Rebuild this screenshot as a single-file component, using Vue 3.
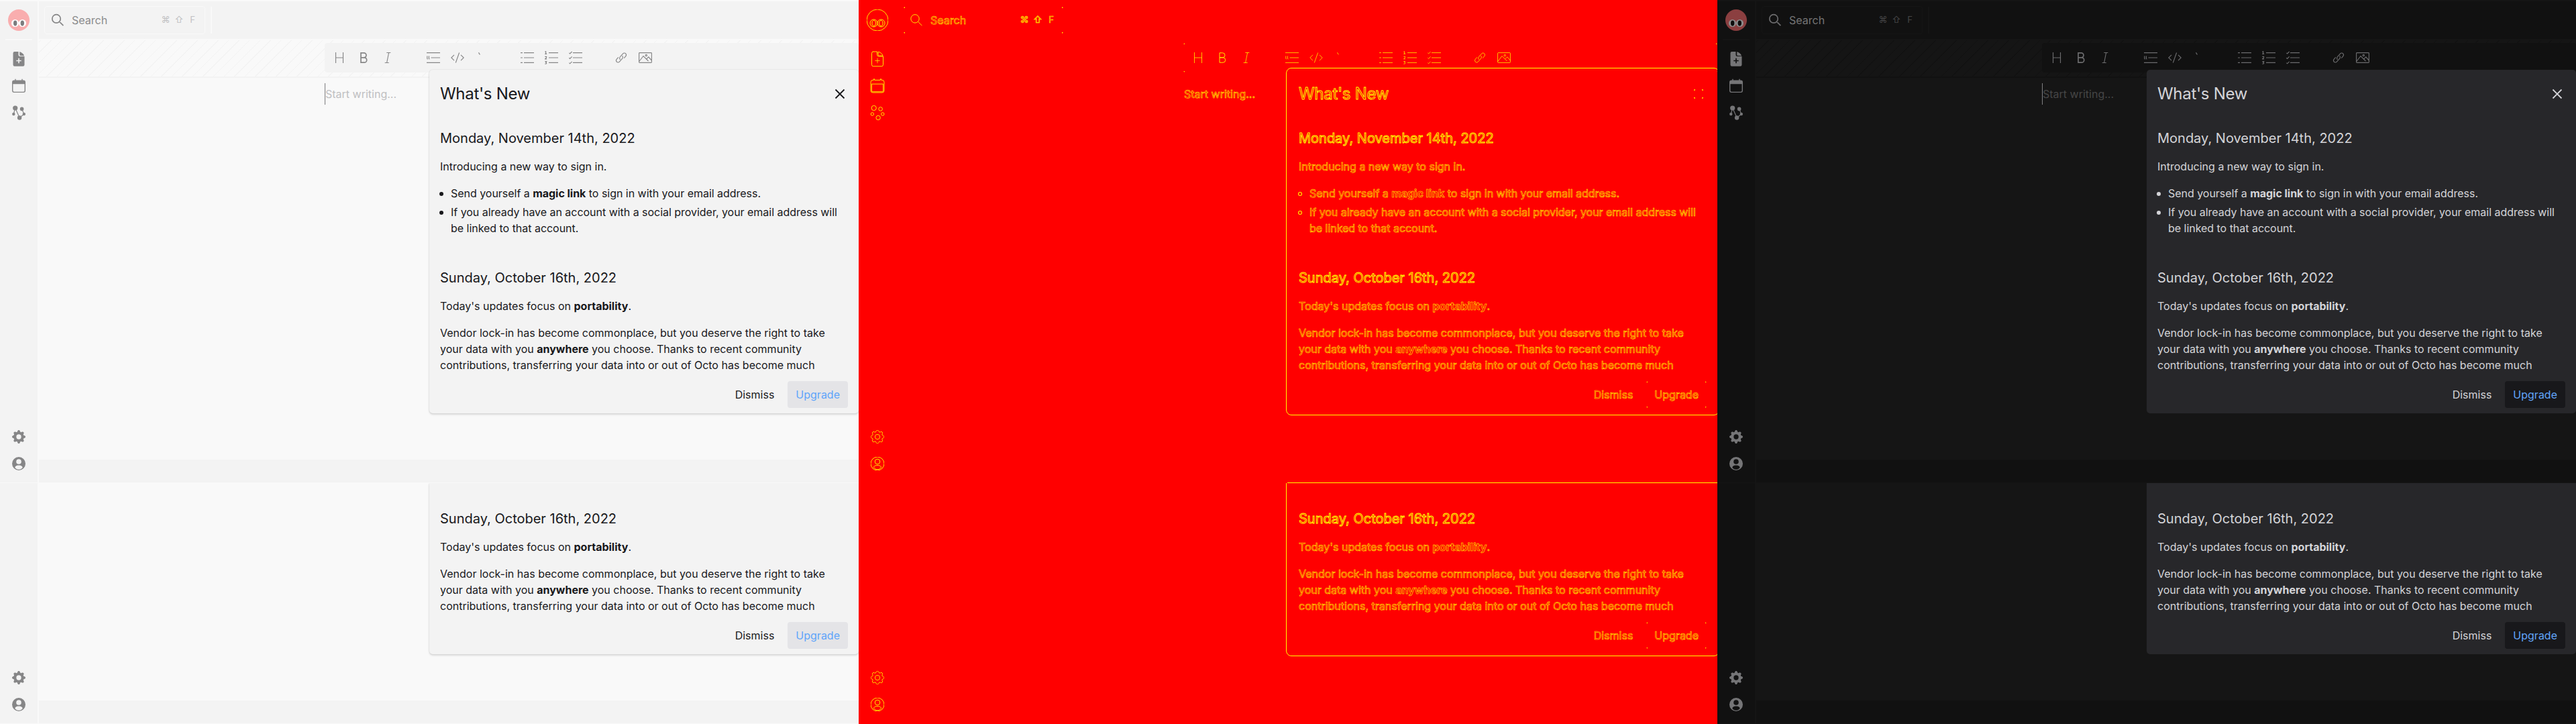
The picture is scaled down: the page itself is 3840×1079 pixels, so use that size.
<script setup>
const themes = ['light', 'diff', 'dark']
const slices = ['full', 'tail']
const tools = [
  ['heading', 'bold', 'italic'],
  ['quote', 'code', 'tick'],
  ['bullets', 'numbers', 'tasks'],
  ['link', 'image'],
]
</script>

<template>
  <svg class="defs" width="0" height="0">
    <symbol id="logo" viewBox="0 0 32 32">
      <circle class="skin" cx="16" cy="16" r="16" />
      <ellipse class="eye" cx="10.500" cy="20.500" rx="5.500" ry="5.500" />
      <ellipse class="eye" cx="21.500" cy="20.500" rx="5.500" ry="5.500" />
      <ellipse class="pupil" cx="10.700" cy="20.600" rx="2.700" ry="4.100" />
      <ellipse class="pupil" cx="21.300" cy="20.600" rx="2.700" ry="4.100" />
    </symbol>
    <symbol id="newfile" viewBox="0 0 24 24">
      <path class="solid" d="M5.500 1h6v4.500a2.500 2.500 0 0 0 2.500 2.500h6.500v12.500a2.300 2.300 0 0 1-2.300 2.300H5.800a2.300 2.300 0 0 1-2.300-2.300V3.300A2.300 2.300 0 0 1 5.800 1zM13.200 1.200c3 .5 6.300 3.200 6.900 6l-5.500-.1a1.400 1.400 0 0 1-1.400-1.400z" />
      <path class="hole" d="M12 10.800v7.400M8.300 14.500h7.400" />
    </symbol>
    <symbol id="calendar" viewBox="0 0 24 24">
      <path class="solid" fill-rule="evenodd" d="M6.300 1.800h1.400v1.600h8.600V1.800h1.400v1.600h1.300a3 3 0 0 1 3 3v12.600a3 3 0 0 1-3 3H5a3 3 0 0 1-3-3V6.400a3 3 0 0 1 3-3h1.300zM3.400 9.200v9.800A1.700 1.700 0 0 0 5.100 20.700h13.800a1.700 1.700 0 0 0 1.700-1.700V9.200z" />
    </symbol>
    <symbol id="graph" viewBox="0 0 24 24">
      <path class="wire" d="M6.500 5.200 4.400 14M6.800 5.200 13.200 19.500M16.600 6.300 19.800 14 13.200 19.500" />
      <circle class="solid" cx="6.700" cy="5" r="3.600" />
      <circle class="solid" cx="16.600" cy="6.400" r="2.800" />
      <circle class="solid" cx="4.300" cy="14" r="2.200" />
      <circle class="solid" cx="19.800" cy="14" r="2.200" />
      <circle class="solid" cx="13.100" cy="19.500" r="3.200" />
    </symbol>
    <symbol id="gear" viewBox="0 0 16 16">
      <path class="solid fine" fill-rule="evenodd" d="M9.405 1.050c-.413-1.400-2.397-1.400-2.810 0l-.1.340a1.464 1.464 0 0 1-2.105.872l-.310-.170c-1.283-.698-2.686.705-1.987 1.987l.169.311c.446.820.023 1.841-.872 2.105l-.340.100c-1.400.413-1.400 2.397 0 2.810l.340.100a1.464 1.464 0 0 1 .872 2.105l-.170.310c-.698 1.283.705 2.686 1.987 1.987l.311-.169a1.464 1.464 0 0 1 2.105.872l.100.340c.413 1.400 2.397 1.400 2.810 0l.100-.340a1.464 1.464 0 0 1 2.105-.872l.310.170c1.283.698 2.686-.705 1.987-1.987l-.169-.311a1.464 1.464 0 0 1 .872-2.105l.340-.100c1.400-.413 1.400-2.397 0-2.810l-.340-.100a1.464 1.464 0 0 1-.872-2.105l.170-.310c.698-1.283-.705-2.686-1.987-1.987l-.311.169a1.464 1.464 0 0 1-2.105-.872zM8 10.930a2.930 2.930 0 1 1 0-5.860 2.930 2.930 0 0 1 0 5.860z" />
    </symbol>
    <symbol id="person" viewBox="0 0 20 20">
      <path class="solid" fill-rule="evenodd" d="M10 0a10 10 0 1 0 0 20 10 10 0 0 0 0-20zM10 3.200a3.800 3.800 0 1 1 0 7.600 3.800 3.800 0 0 1 0-7.600zM4.200 15.400c1.400-2.600 3.400-2.800 5.800-2.800s4.400.2 5.800 2.800c-1.500 2.300-3.500 3.300-5.800 3.300s-4.300-1-5.800-3.300z" />
    </symbol>
    <symbol id="search" viewBox="0 0 20 20">
      <path class="line thick" d="M8 1.700a6.200 6.200 0 1 0 0 12.400 6.200 6.200 0 0 0 0-12.400zM12.600 12.400l5.800 5.800" />
    </symbol>
    <symbol id="close" viewBox="0 0 20 20"><path class="line cross" d="M3.500 3.500l13 13M16.500 3.500l-13 13" /></symbol>
    <symbol id="heading" viewBox="0 0 20 20"><path class="line" d="M4.500 2v16M15.500 2v16M4.500 10h11" /></symbol>
    <symbol id="bold" viewBox="0 0 20 20"><path class="line thick" d="M6 2.800h4.500a3.500 3.500 0 0 1 0 7H6zM6 9.800h5a3.700 3.700 0 0 1 0 7.400H6z" /></symbol>
    <symbol id="italic" viewBox="0 0 20 20"><path class="line" d="M8.300 2.500h6M5.700 17.500h6M11.600 2.500 8.600 17.500" /></symbol>
    <symbol id="quote" viewBox="0 0 20 20"><path class="line" d="M0 2.600h20M6.500 10h13.500M0 17.400h20" /><path class="line" d="M.8 7.500v3.500q0 1 1 1M3.400 7.500v3.500q0 1 1 1" /></symbol>
    <symbol id="code" viewBox="0 0 20 20"><path class="line" d="M5 5.800.8 10 5 14.200M15 5.800l4.200 4.200-4.200 4.200M12.600 2.500 7.300 17.500" /></symbol>
    <symbol id="tick" viewBox="0 0 20 20"><path class="line" d="M5.500 2.200q1 2.300 2 3.200" /></symbol>
    <symbol id="bullets" viewBox="0 0 20 20"><path class="line" d="M0 2.600h3M0 10h3M0 17.400h3M5 2.600h15M5 10h15M5 17.400h15" /></symbol>
    <symbol id="numbers" viewBox="0 0 20 20"><path class="line" d="M6 2.600h14M6 10h14M6 17.400h14M.3 1.300 1.700.7V4.300M.2 4.300h3M.3 8.300h2.300v1.500L.5 11.800h2.600M.3 15.500h2.400l-1.200 1.600q1.500.2 1.200 1.300T.3 19.200" /></symbol>
    <symbol id="tasks" viewBox="0 0 20 20"><path class="line" d="M6 2.600h14M6 10h14M6 17.400h14M.3 2.800l1.300 1.200 3-3M.3 10.200l1.300 1.200 3-3M.3 17.600l1.300 1.200 3-3" /></symbol>
    <symbol id="link" viewBox="0 0 20 20"><path class="line" d="M8.500 12.800a3 3 0 0 1 .2-4.400l4-4.500a2.700 2.700 0 0 1 4 0 2.900 2.900 0 0 1 0 3.900l-2.500 2.900M11.500 7.200a3 3 0 0 1-.2 4.400l-4 4.500a2.700 2.700 0 0 1-4 0 2.900 2.900 0 0 1 0-3.900l2.500-2.900" /></symbol>
    <symbol id="image" viewBox="0 0 20 20"><path class="line" d="M1.500 2.600h17q.9 0 .9.900v13q0 .9-.9.900h-17q-.9 0-.9-.9v-13q0-.9.900-.9zM.8 15.500 7 7.500l7.500 7.500M11.800 11.800l3-3 4.500 5.200" /><circle class="line" cx="11.300" cy="6.500" r="1.200" /></symbol>
  </svg>

  <div class="board">
    <div v-for="theme in themes" :key="theme" class="column" :class="theme">
      <div v-for="slice in slices" :key="slice" class="app" :class="slice">
        <nav class="sidebar">
          <template v-if="slice === 'full'">
            <svg class="logo"><use href="#logo" /></svg>
            <i class="rule" />
            <svg class="nav"><use href="#newfile" /></svg>
            <svg class="nav"><use href="#calendar" /></svg>
            <svg class="nav"><use href="#graph" /></svg>
          </template>
          <span class="grow" />
          <svg class="nav small"><use href="#gear" /></svg>
          <svg class="nav small"><use href="#person" /></svg>
        </nav>
        <main class="main">
          <template v-if="slice === 'full'">
            <header class="topbar">
              <div class="search marks">
                <svg class="glass"><use href="#search" /></svg>
                <span class="label">Search</span>
                <kbd>⌘</kbd><kbd>⇧</kbd><kbd>F</kbd>
              </div>
              <i class="split" />
            </header>
            <div class="toolrow">
              <div class="tools marks">
                <div v-for="(group, g) in tools" :key="g" class="group">
                  <svg v-for="t in group" :key="t" class="tool"><use :href="'#' + t" /></svg>
                </div>
              </div>
            </div>
          </template>
          <div class="editor"><span v-if="slice === 'full'" class="placeholder">Start writing...</span></div>
          <footer class="status" />
        </main>
        <section class="modal">
          <div v-if="slice === 'full'" class="title"><h1>What's New</h1><svg class="close"><use href="#close" /></svg></div>
          <div class="body">
            <article v-if="slice === 'full'">
              <h2>Monday, November 14th, 2022</h2>
              <p>Introducing a new way to sign in.</p>
              <ul>
                <li>Send yourself a <b>magic link</b> to sign in with your email address.</li>
                <li>If you already have an account with a social provider, your email address will be linked to that account.</li>
              </ul>
            </article>
            <article>
              <h2>Sunday, October 16th, 2022</h2>
              <p>Today's updates focus on <b>portability</b>.</p>
              <p>Vendor lock-in has become commonplace, but you deserve the right to take your data with you <b>anywhere</b> you choose. Thanks to recent community contributions, transferring your data into or out of Octo has become much</p>
            </article>
          </div>
          <div class="actions"><button>Dismiss</button><button class="primary marks">Upgrade</button></div>
        </section>
      </div>
    </div>
  </div>
</template>

<style>
body { margin: 0; overflow: hidden; }
</style>

<style scoped>
.defs { position: absolute; }
.solid { fill: var(--icon); stroke: var(--edge); stroke-width: .9; }
.fine { stroke-width: .65; }
.wire { fill: none; stroke: var(--icon); stroke-width: 1.2; }
.hole { fill: none; stroke: var(--hole); stroke-width: var(--hole-width, 1.6); }
.line { fill: none; stroke: var(--icon-line); stroke-width: var(--thin, 1.15); }
.thick { stroke-width: var(--bold, 1.7); }
.cross { stroke-width: 1.8; stroke-dasharray: var(--dash, none); }
.skin { fill: var(--skin); stroke: var(--edge); stroke-width: .9; }
.eye { fill: var(--eye); stroke: var(--edge); }
.pupil { fill: var(--pupil); stroke: var(--edge); }

.board { display: flex; width: 3840px; height: 1079px; font-family: Inter, "Noto Sans", sans-serif; font-size: 16px; line-height: 24px; }
.column { width: 1280px; overflow: hidden; }
.light {
  --bar: #f3f3f3; --page: #f9f9f9; --icon: #868687; --icon-line: #868687; --edge: none; --hole: #f3f3f3;
  --skin: #f9adae; --eye: #fff; --pupil: #7c7c7e; --muted: #8b8b8c; --faint: #c0c0c2; --caret: #7c7c7e;
  --modal: #f3f3f3; --text: #18181b; --button: #e4e4e7; --accent: #60a5fa;
}
.dark {
  --bar: #111; --page: #151515; --icon: #757577; --icon-line: #6c6c6e; --edge: none; --hole: #111;
  --skin: #8b3f40; --eye: #8c8c8c; --pupil: #0c0c0c; --muted: #757576; --faint: #454546; --caret: #808082;
  --modal: #27272a; --text: #d4d4d8; --button: #18181b; --accent: #60a5fa;
}
.diff {
  --bar: #f00; --page: #f00; --icon: #f00; --icon-line: #ff0; --edge: #ff0; --hole: #ff0; --hole-width: .7;
  --skin: #f00; --eye: #f00; --pupil: #f00; --muted: #f00; --faint: #f00; --caret: #f00;
  --modal: #f00; --text: #f00; --button: #f00; --accent: #f00;
  --thin: .75; --bold: .9; --dash: 1.5 15.4;
  -webkit-text-stroke: .55px #ff0;
}
.app { position: relative; display: flex; box-sizing: border-box; width: 1280px; padding-bottom: 1px; overflow: hidden; background: var(--page); }
.full { height: 720px; padding-top: 2px; }
.tail { height: 359px; }
.sidebar { display: flex; flex-direction: column; align-items: center; box-sizing: border-box; width: 56px; margin-right: 2px; padding: 12px 0 18px; background: var(--bar); }
.logo { width: 32px; height: 32px; }
.rule { width: 40px; height: 2px; margin: 12px 0 16px; background: var(--page); }
.nav { width: 24px; height: 24px; margin-bottom: 16px; overflow: visible; }
.small { width: 20px; height: 20px; margin: 0 0 20px; }
.small:last-child { margin-bottom: 0; }
.grow { flex: 1; }
.main { display: flex; flex: 1; flex-direction: column; min-width: 0; }
.topbar { display: flex; align-items: center; height: 56px; padding-left: 8px; background: var(--bar); }
.search { display: flex; align-items: center; box-sizing: border-box; width: 240px; height: 42px; padding: 0 8px 0 9px; border: 1px solid var(--page); border-radius: 4px; }
.glass { width: 20px; height: 20px; }
.label { flex: 1; margin-left: 11px; color: var(--muted); }
kbd { width: 20px; padding-bottom: 2px; color: var(--faint); font: 13px/16px Inter, "DejaVu Sans", sans-serif; text-align: center; }
.split { width: 2px; height: 40px; margin-left: 8px; background: var(--page); }
.toolrow { display: flex; box-sizing: border-box; height: 58px; padding: 6px 0 6px 426px; border-bottom: 2px solid var(--bar); background: repeating-linear-gradient(-45deg, transparent 0 10px, var(--bar) 10px 11px) 0 2px no-repeat; }
.tools { display: flex; flex: 1; gap: 32px; padding-left: 4px; border-radius: 4px; background-color: var(--bar); }
.group { display: flex; align-items: center; }
.tool { width: 20px; height: 20px; margin: 0 8px; }
.editor { flex: 1; padding: 8px 0 0 426px; }
.placeholder { display: inline-block; height: 32px; line-height: 32px; border-left: 1px solid var(--caret); color: var(--faint); }
.status { height: 34px; background: var(--bar); }

.modal { position: absolute; left: 640px; top: 104px; display: flex; flex-direction: column; box-sizing: border-box; width: 640px; height: 512px; padding: 0 16px 8px; border-radius: 5px; background: var(--modal); color: var(--text); }
.tail .modal { top: 0; height: 255px; border-radius: 0 0 5px 5px; }
.light .modal { box-shadow: 0 0 2px rgba(0, 0, 0, .14), 0 2px 3px rgba(0, 0, 0, .12); }
.diff .modal { outline: 1px solid #ff0; outline-offset: 2px; }
.diff .full::after { content: ""; position: absolute; right: 0; bottom: 0; width: 641px; height: 1px; background: #ff0; }
.title { display: flex; align-items: center; justify-content: space-between; height: 72px; flex: none; }
h1 { margin: 0; font-size: 24px; font-weight: 400; letter-spacing: -.3px; }
.close { width: 20px; height: 20px; margin-right: 2px; --icon-line: var(--text); }
.diff .close { --icon-line: #ff0; }
.body { display: flex; flex: 1; flex-direction: column; justify-content: flex-end; padding-bottom: 12px; }
h2 { margin: 0 0 16px; font-size: 20px; font-weight: 400; line-height: 28px; }
article + article { margin-top: 48px; }
p { margin: 0 0 16px; }
p:last-child, li:last-child { margin-bottom: 0; }
ul { margin: 0; padding-left: 16px; list-style: none; letter-spacing: -.03px; }
li { position: relative; margin-bottom: 4px; }
li::before { content: ""; position: absolute; left: -17px; top: 10px; width: 6px; height: 6px; border-radius: 3px; background: var(--text); }
.diff li::before { width: 4px; height: 4px; margin: 1px; box-shadow: 0 0 0 1px #ff0; }
b { font-weight: 700; }
.actions { display: flex; justify-content: flex-end; gap: 8px; flex: none; }
button { height: 40px; padding: 0 12px; border: 0; border-radius: 4px; background: none; color: inherit; font: inherit; }
.primary { background-color: var(--button); color: var(--accent); }
.diff button { -webkit-text-stroke: .55px #ff0; }
.diff h1, .diff h2 { -webkit-text-stroke: .9px #ff0; }
.diff .marks { background-image: linear-gradient(#ff0, #ff0), linear-gradient(#ff0, #ff0), linear-gradient(#ff0, #ff0), linear-gradient(#ff0, #ff0); background-position: 0 0, 100% 0, 0 100%, 100% 100%; background-size: 2px 2px; background-repeat: no-repeat; }
</style>
